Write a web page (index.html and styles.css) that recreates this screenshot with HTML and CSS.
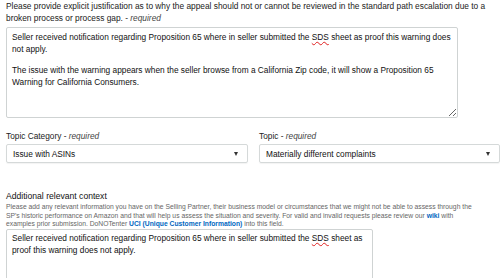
FILE: index.html
```html
<!DOCTYPE html>
<html>
<head>
<meta charset="utf-8">
<link rel="stylesheet" href="styles.css">
</head>
<body>
<div class="page">
  <div class="q-label">Please provide explicit justification as to why the appeal should not or cannot be reviewed in the standard path escalation due to a<br>broken process or process gap. - <i>required</i></div>
  <div class="ta ta1">
    <p>Seller received notification regarding Proposition 65 where in seller submitted the <span class="sp">SDS</span> sheet as proof this warning does<br>not apply.</p>
    <p>The issue with the warning appears when the seller browse from a California Zip code, it will show a Proposition 65<br>Warning for California Consumers.</p>
  </div>
  <div class="row">
    <div class="col col1">
      <div class="f-label">Topic Category - <i>required</i></div>
      <div class="select"><span>Issue with ASINs</span><span class="arrow"></span></div>
    </div>
    <div class="col col2">
      <div class="f-label">Topic - <i>required</i></div>
      <div class="select"><span>Materially different complaints</span><span class="arrow"></span></div>
    </div>
  </div>
  <div class="ctx-title">Additional relevant context</div>
  <div class="ctx-desc">Please add any relevant information you have on the Selling Partner, their business model or circumstances that we might not be able to assess through the<br>SP's historic performance on Amazon and that will help us assess the situation and severity. For valid and invalid requests please review our <a class="lnk">wiki</a> with<br>examples prior submission. DoNOTenter <a class="lnk">UCI (Unique Customer Information)</a> into this field.</div>
  <div class="ta ta3">
    <p>Seller received notification regarding Proposition 65 where in seller submitted the <span class="sp">SDS</span> sheet as<br>proof this warning does not apply.</p>
  </div>
</div>
</body>
</html>
```
FILE: styles.css
```css
html, body {
  margin: 0;
  padding: 0;
  background: #fff;
  overflow: hidden;
}
.page {
  padding: 0 0 0 6px;
  font-family: "Liberation Sans", Arial, sans-serif;
  color: #222;
  width: 500px;
  box-sizing: border-box;
}
.q-label {
  font-size: 8.35px;
  line-height: 12px;
  white-space: nowrap;
  color: #222;
}
.q-label i, .f-label i { color: #444; }
.ta {
  border: 1px solid #cfd3d3;
  border-radius: 2px;
  background: #fff;
  resize: both;
  overflow: hidden;
  box-sizing: border-box;
  padding: 3px 5px;
  font-size: 8.3px;
  line-height: 12px;
  white-space: nowrap;
  color: #111;
}
.ta p { margin: 0 0 9px 0; }
.ta1 {
  margin-top: 3px;
  width: 452px;
  height: 91px;
}
.sp {
  text-decoration: underline wavy #e02020;
  text-decoration-thickness: 1px;
  text-underline-offset: 1px;
  text-decoration-skip-ink: none;
}
.row {
  display: flex;
  gap: 11px;
  margin-top: 12px;
}
.col1 { flex: 0 0 242px; }
.col2 { flex: 1 1 auto; }
.f-label {
  font-size: 8.3px;
  line-height: 12px;
  color: #222;
}
.select {
  margin-top: 2px;
  height: 19px;
  box-sizing: border-box;
  border: 1px solid #d5d9d9;
  border-radius: 2px;
  box-shadow: 0 1px 1px rgba(0,0,0,0.05);
  display: flex;
  align-items: center;
  justify-content: space-between;
  padding: 0 9px 0 6px;
  font-size: 8.3px;
  color: #111;
}
.arrow {
  width: 0;
  height: 0;
  border-left: 2.5px solid transparent;
  border-right: 2.5px solid transparent;
  border-top: 4px solid #333;
}
.ctx-title {
  margin-top: 28px;
  font-size: 8.6px;
  line-height: 11px;
  color: #111;
}
.ctx-desc {
  margin-top: 1px;
  font-size: 6.75px;
  line-height: 8.5px;
  color: #666;
  white-space: nowrap;
}
.lnk {
  color: #0066c0;
  font-weight: bold;
}
.ta3 {
  margin-top: 0;
  padding-top: 2px;
  width: 367px;
  height: 60px;
}
```
